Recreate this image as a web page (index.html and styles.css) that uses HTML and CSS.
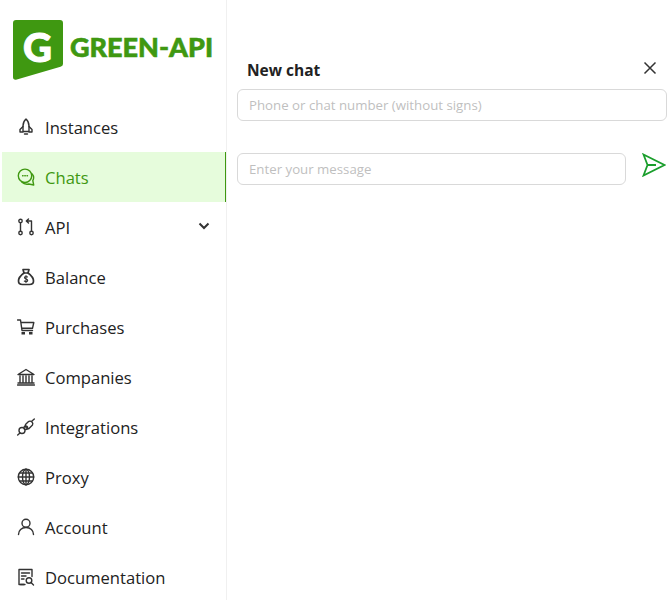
FILE: index.html
```html
<!DOCTYPE html>
<html lang="en">
<head>
<meta charset="utf-8">
<title>GREEN-API</title>
<link rel="stylesheet" href="styles.css">
</head>
<body>
<div class="app">
  <aside class="sidebar">
    <div class="logo">
      <div class="logo-mark">
        <svg class="logo-shape" viewBox="0 0 50 60"><path d="M3 0H47Q50 0 50 3V44Q50 46 47.500 46.700L3 59.700Q0 60 0 57V3Q0 0 3 0Z" fill="#3f9811"/></svg>
        <span class="logo-g">G</span>
      </div>
      <span class="logo-text">GREEN-API</span>
    </div>
    <nav class="menu">
      <a class="item"><svg class="icon" viewBox="0 0 18 18"><path d="M9 1C6.800 3 6 5.500 6 8V13.500H12V8C12 5.500 11.200 3 9 1Z"/><path d="M6 8.500 3 11.500V14H6M12 8.500 15 11.500V14H12M7.500 16H10.500"/></svg><span>Instances</span></a>
      <a class="item active"><svg class="icon" viewBox="0 0 18 18"><circle cx="8" cy="7.800" r="6.700"/><path d="M15.200 6C16.800 8 16.800 10.800 15.800 12.600L16.700 17 11.800 16C9.500 16.400 6.500 15.800 5 14.300"/><path d="M5.600 7.800H6.100M7.800 7.800H8.300M10 7.800H10.500"/></svg><span>Chats</span></a>
      <a class="item"><svg class="icon" viewBox="0 0 18 18"><circle cx="3.500" cy="3" r="1.700"/><circle cx="3.500" cy="15" r="1.700"/><circle cx="14.500" cy="15" r="1.700"/><path d="M3.500 4.700V13.300M14.500 13.300V3H9.500M11.500 1 9.300 3 11.500 5"/></svg><span>API</span><svg class="chevron" viewBox="0 0 12 8"><path d="M1.500 1.500 6 6 10.500 1.500"/></svg></a>
      <a class="item"><svg class="icon heavy" viewBox="0 0 18 18"><path d="M6 1.500H12L11 5H7Z"/><path d="M7 5C3.500 7.500 1.500 10.500 1.500 13 1.500 15.500 3.500 16.500 5.500 16.500H12.500C14.500 16.500 16.500 15.500 16.500 13 16.500 10.500 14.500 7.500 11 5"/><path class="thin" d="M10.500 9C9.500 8.200 7.500 8.500 7.500 9.800 7.500 11.400 10.700 10.800 10.700 12.400 10.700 13.700 8.500 14 7.300 13M9 7.500V14.500"/></svg><span>Balance</span></a>
      <a class="item"><svg class="icon" viewBox="0 0 18 18"><path d="M0.500 2H3.500L5 12.500H15.500M3.800 4.500H16.800L15.500 10.300H4.700"/><path class="solid" d="M4.500 14H8V16.500H4.500ZM12 14H15.500V16.500H12Z"/></svg><span>Purchases</span></a>
      <a class="item"><svg class="icon" viewBox="0 0 18 18"><path d="M1 6.500 9 1.500 17 6.500ZM1 15H17M0.500 17H17.500M3 8V14M6 8V14M9 8V14M12 8V14M15 8V14"/></svg><span>Companies</span></a>
      <a class="item"><svg class="icon" viewBox="0 0 18 18"><path d="M0.700 17 3 15M15 3 17.300 1"/><circle cx="5" cy="12.500" r="3"/><circle cx="8.800" cy="9.800" r="1.800"/><path d="M8.500 6.500 11 4C12 3 14 3 15 4 16 5 16 6 15.500 7L12 10.500C11 11 10 10.500 9 9.500 8 8.500 8 7.500 8.500 6.500Z"/></svg><span>Integrations</span></a>
      <a class="item"><svg class="icon" viewBox="0 0 18 18"><circle cx="9" cy="9" r="7.700"/><ellipse cx="9" cy="9" rx="3.500" ry="7.700"/><path d="M9 1.300V16.700M1.300 9H16.700M2.500 5H15.500M2.500 13H15.500"/></svg><span>Proxy</span></a>
      <a class="item"><svg class="icon" viewBox="0 0 18 18"><circle cx="9" cy="5.300" r="4"/><path d="M1.500 16.500C1.500 12.500 4.500 9.500 9 9.500 13.500 9.500 16.500 12.500 16.500 16.500"/></svg><span>Account</span></a>
      <a class="item"><svg class="icon" viewBox="0 0 18 18"><path d="M8 16.500H2V1.500H15V8.500"/><path d="M4.500 5H12.500M4.500 8H9M4.500 11H7M3.500 16.500H7"/><circle cx="12" cy="12.500" r="2.800"/><path d="M14 14.500 16.500 17"/></svg><span>Documentation</span></a>
    </nav>
  </aside>
  <main class="content">
    <header class="chat-head">
      <h1 class="title">New chat</h1>
      <svg class="close" viewBox="0 0 14 14"><path d="M1.500 1.500 12.500 12.500M12.500 1.500 1.500 12.500"/></svg>
    </header>
    <input class="field" type="text" placeholder="Phone or chat number (without signs)">
    <div class="composer">
      <input class="field" type="text" placeholder="Enter your message">
      <svg class="send" viewBox="0 0 24 24"><path d="M1.500 1.500 22.500 12 1.500 22.500 5.500 12ZM5.500 12H14"/></svg>
    </div>
  </main>
</div>
</body>
</html>
```

FILE: styles.css
```css
* { box-sizing: border-box; }
html, body { margin: 0; height: 100%; overflow: hidden; background: #fff; }
body { font-family: "Open Sans", "Noto Sans", sans-serif; color: #222; }
.app { display: flex; height: 600px; width: 672px; }
.sidebar { width: 227px; flex: none; padding-left: 2px; border-right: 1px solid #f0f0f0; }
.logo { display: flex; align-items: center; height: 102px; padding: 20px 0 22px 11px; gap: 7px; }
.logo-mark { position: relative; width: 50px; height: 60px; flex: none; }
.logo-shape { display: block; width: 50px; height: 60px; }
.logo-g { position: absolute; left: 0; top: 3px; width: 43px; text-align: center; margin-left: 3px; font: 900 40px/48px Lato, sans-serif; color: #fff; -webkit-text-stroke: 1px #fff; }
.logo-text { font: 900 27px/30px Lato, sans-serif; color: #3f9811; margin-top: -7px; white-space: nowrap; -webkit-text-stroke: .6px #3f9811; }
.menu { display: flex; flex-direction: column; }
.item { display: flex; align-items: center; height: 50px; padding-left: 15px; gap: 10px; font-size: 16.600px; color: #222; flex: none; }
.item.active { background: #e6fcdc; color: #3f9811; border-right: 1px solid #3f9811; }
.icon { width: 18px; height: 18px; flex: none; fill: none; stroke: #333; stroke-width: 1.400; stroke-linejoin: round; stroke-linecap: round; }
.active .icon { stroke: #3f9811; }
.icon.heavy { stroke-width: 1.700; }
.icon .solid { fill: #333; stroke: none; }
.icon .thin { stroke-width: 1.100; }
.chevron { width: 12px; height: 8px; margin-left: auto; margin-right: 16px; margin-top: -3px; fill: none; stroke: #333; stroke-width: 2; }
.content { flex: 1; padding-left: 10px; padding-right: 5px; min-width: 0; }
.chat-head { display: flex; align-items: center; justify-content: space-between; height: 89px; padding: 52px 10px 0 10px; }
.title { margin: 0; font-size: 15.500px; line-height: 20px; font-weight: 700; color: #222; margin-top: -1px; }
.close { width: 14px; height: 14px; margin-top: -6px; fill: none; stroke: #333; stroke-width: 1.500; }
.field { display: block; width: 100%; height: 32px; border: 1px solid #d9d9d9; border-radius: 6px; padding: 0 11px; font: 400 13.250px "Open Sans", sans-serif; color: #222; background: #fff; outline: none; }
.field::placeholder { color: #bfbfbf; opacity: 1; }
.composer { display: flex; align-items: flex-start; margin-top: 32px; margin-right: 1px; gap: 16px; }
.composer .field { flex: 1; width: auto; min-width: 0; }
.send { width: 24px; height: 24px; flex: none; fill: none; stroke: #1a9e2c; stroke-width: 1.800; stroke-linejoin: miter; }
```
